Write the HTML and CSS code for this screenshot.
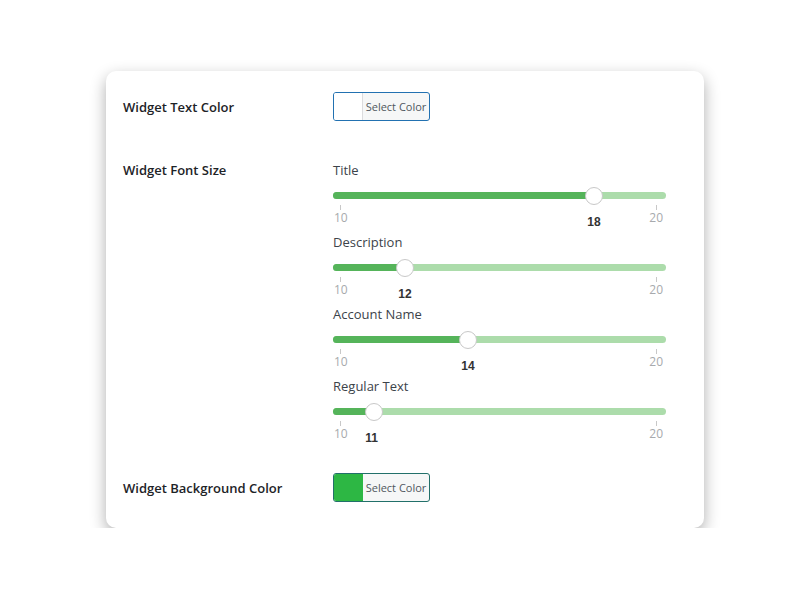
FILE: index.html
```html
<!DOCTYPE html>
<html lang="en">
<head>
    <meta charset="UTF-8">
    <meta name="viewport" content="width=device-width, initial-scale=1.0">
    <title>Widget Settings</title>
    <link rel="stylesheet" href="styles.css">
</head>
<body>
    <div class="card">
        <div class="row row-color">
            <div class="row-label">Widget Text Color</div>
            <div class="row-field">
                <button class="color-button">
                    <span class="swatch swatch-white"></span>
                    <span class="color-text">Select Color</span>
                </button>
            </div>
        </div>

        <div class="row row-sizes">
            <div class="row-label">Widget Font Size</div>
            <div class="row-field">
                <div class="slider">
                    <div class="slider-label">Title</div>
                    <div class="slider-track">
                        <div class="track-bar"></div>
                        <div class="track-fill" style="width: calc(9px + 0.8 * (100% - 18px))"></div>
                        <div class="thumb" style="left: calc(9px + 0.8 * (100% - 18px))"></div>
                    </div>
                    <div class="scale">
                        <span class="tick tick-min"></span>
                        <span class="tick tick-max"></span>
                        <span class="scale-min">10</span>
                        <span class="scale-max">20</span>
                        <span class="value" style="left: calc(9px + 0.8 * (100% - 18px))">18</span>
                    </div>
                </div>
                <div class="slider">
                    <div class="slider-label">Description</div>
                    <div class="slider-track">
                        <div class="track-bar"></div>
                        <div class="track-fill" style="width: calc(9px + 0.2 * (100% - 18px))"></div>
                        <div class="thumb" style="left: calc(9px + 0.2 * (100% - 18px))"></div>
                    </div>
                    <div class="scale">
                        <span class="tick tick-min"></span>
                        <span class="tick tick-max"></span>
                        <span class="scale-min">10</span>
                        <span class="scale-max">20</span>
                        <span class="value" style="left: calc(9px + 0.2 * (100% - 18px))">12</span>
                    </div>
                </div>
                <div class="slider">
                    <div class="slider-label">Account Name</div>
                    <div class="slider-track">
                        <div class="track-bar"></div>
                        <div class="track-fill" style="width: calc(9px + 0.4 * (100% - 18px))"></div>
                        <div class="thumb" style="left: calc(9px + 0.4 * (100% - 18px))"></div>
                    </div>
                    <div class="scale">
                        <span class="tick tick-min"></span>
                        <span class="tick tick-max"></span>
                        <span class="scale-min">10</span>
                        <span class="scale-max">20</span>
                        <span class="value" style="left: calc(9px + 0.4 * (100% - 18px))">14</span>
                    </div>
                </div>
                <div class="slider">
                    <div class="slider-label">Regular Text</div>
                    <div class="slider-track">
                        <div class="track-bar"></div>
                        <div class="track-fill" style="width: calc(9px + 0.1 * (100% - 18px))"></div>
                        <div class="thumb" style="left: calc(9px + 0.1 * (100% - 18px))"></div>
                    </div>
                    <div class="scale">
                        <span class="tick tick-min"></span>
                        <span class="tick tick-max"></span>
                        <span class="scale-min">10</span>
                        <span class="scale-max">20</span>
                        <span class="value" style="left: calc(9px + 0.1 * (100% - 18px) - 2px)">11</span>
                    </div>
                </div>
            </div>
        </div>

        <div class="row row-color row-last">
            <div class="row-label">Widget Background Color</div>
            <div class="row-field">
                <button class="color-button color-button-green">
                    <span class="swatch swatch-green"></span>
                    <span class="color-text">Select Color</span>
                </button>
            </div>
        </div>
    </div>
</body>
</html>
```

FILE: styles.css
```css
body {
    margin: 0;
    background: #fff;
    font-family: "Open Sans", Arial, sans-serif;
}
.card {
    width: 598px;
    margin: 71px 0 0 106px;
    padding: 21px 0 26px 17px;
    box-sizing: border-box;
    background: #fff;
    border-radius: 10px;
    box-shadow: 0 6px 16px rgba(0, 0, 0, .32);
}
.row {
    display: flex;
}
.row-label {
    width: 210px;
    flex-shrink: 0;
    font-size: 13px;
    font-weight: 600;
    color: #1d2327;
}
.row-color {
    align-items: center;
}
.row-sizes {
    margin-top: 40px;
}
.row-sizes .row-label {
    line-height: 18px;
}
.row-last {
    margin-top: 24px;
}
.row-field {
    width: 333px;
}
.color-button {
    display: flex;
    padding: 0;
    height: 29px;
    width: 97px;
    border: 1px solid #2271b1;
    border-radius: 3px;
    background: #f6f7f7;
    overflow: hidden;
    cursor: pointer;
}
.color-button-green {
    border-color: #22706a;
}
.swatch {
    width: 28px;
    height: 100%;
    border-right: 1px solid #dcdcde;
}
.swatch-white {
    background: #fff;
}
.swatch-green {
    background: #2db744;
    border-right-color: #2db744;
}
.color-text {
    flex: 1;
    align-self: center;
    text-align: center;
    font-size: 11px;
    color: #50575e;
    font-family: "Open Sans", Arial, sans-serif;
}
.slider {
    height: 72px;
}
.slider-label {
    font-size: 13px;
    line-height: 18px;
    color: #3c434a;
}
.slider-track {
    position: relative;
    height: 18px;
    margin-top: 7px;
}
.track-bar,
.track-fill {
    position: absolute;
    left: 0;
    top: 6px;
    height: 7px;
    border-radius: 4px;
}
.track-bar {
    width: 100%;
    background: #acdcab;
}
.track-fill {
    background: #55b45a;
}
.thumb {
    position: absolute;
    top: 1px;
    width: 16px;
    height: 16px;
    margin-left: -9px;
    border: 1px solid #c8c8c8;
    border-radius: 50%;
    background: #fff;
}
.scale {
    position: relative;
    height: 29px;
    font-size: 12px;
    color: #a7aaad;
}
.tick {
    position: absolute;
    top: 1px;
    width: 1px;
    height: 5px;
    background: #c8c8c8;
}
.tick-min {
    left: 7px;
}
.tick-max {
    right: 9px;
}
.scale-min,
.scale-max {
    position: absolute;
    top: 7px;
    line-height: 14px;
}
.scale-min {
    left: 1px;
}
.scale-max {
    right: 3px;
}
.value {
    position: absolute;
    top: 11px;
    transform: translateX(-50%);
    font-family: "Liberation Sans", Arial, sans-serif;
    font-size: 12px;
    font-weight: bold;
    line-height: 14px;
    color: #333;
}
```
